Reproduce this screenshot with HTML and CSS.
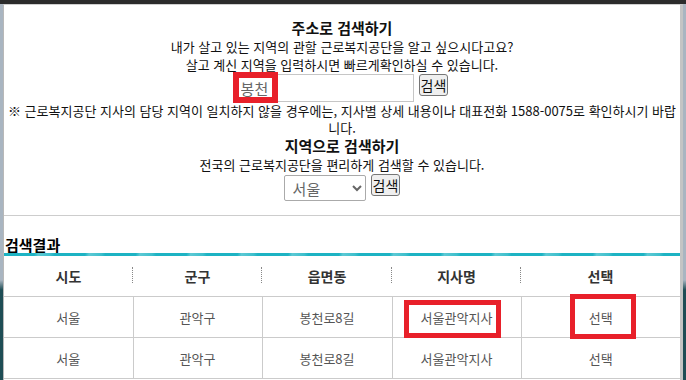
FILE: index.html
```html
<!DOCTYPE html>
<html lang="ko">
<head>
    <meta charset="UTF-8">
    <meta name="viewport" content="width=device-width, initial-scale=1.0">
    <title>근로복지공단 지사 찾기</title>
    <link rel="stylesheet" href="styles.css">
</head>
<body>
    <div class="top-bar"></div>

    <div class="modal">
        <div class="search-box">
            <h2>주소로 검색하기</h2>
            <p>내가 살고 있는 지역의 관할 근로복지공단을 알고 싶으시다고요?</p>
            <p>살고 계신 지역을 입력하시면 빠르게확인하실 수 있습니다.</p>
            <div class="form-row">
                <input type="text" id="address" value="봉천">
                <button>검색</button>
            </div>
            <p class="notice">※ 근로복지공단 지사의 담당 지역이 일치하지 않을 경우에는, 지사별 상세 내용이나 대표전화 1588-0075로 확인하시기 바랍니다.</p>

            <h2>지역으로 검색하기</h2>
            <p>전국의 근로복지공단을 편리하게 검색할 수 있습니다.</p>
            <div class="form-row">
                <select id="region">
                    <option>서울</option>
                    <option>부산</option>
                    <option>대구</option>
                    <option>인천</option>
                    <option>광주</option>
                </select>
                <button>검색</button>
            </div>
        </div>

        <div class="result">
            <h3>검색결과</h3>
            <div class="stripe"></div>
            <table>
                <colgroup>
                    <col style="width: 129px">
                    <col style="width: 129px">
                    <col style="width: 130px">
                    <col style="width: 129px">
                    <col>
                </colgroup>
                <thead>
                    <tr>
                        <th>시도</th>
                        <th>군구</th>
                        <th>읍면동</th>
                        <th>지사명</th>
                        <th>선택</th>
                    </tr>
                </thead>
                <tbody>
                    <tr>
                        <td>서울</td>
                        <td>관악구</td>
                        <td>봉천로8길</td>
                        <td>서울관악지사</td>
                        <td>선택</td>
                    </tr>
                    <tr>
                        <td>서울</td>
                        <td>관악구</td>
                        <td>봉천로8길</td>
                        <td>서울관악지사</td>
                        <td>선택</td>
                    </tr>
                </tbody>
            </table>
        </div>
    </div>

    <!-- red marks drawn over the screenshot -->
    <div class="mark mark-input"></div>
    <div class="mark mark-branch"></div>
    <div class="mark mark-select"></div>
</body>
</html>
```

FILE: styles.css
```css
body {
    margin: 0;
    height: 380px;
    overflow: hidden;
    font-family: "Noto Sans CJK KR", "Liberation Sans", sans-serif;
    background: linear-gradient(to bottom, #a9b5c1 0, #a9b5c1 280px, #1e4d55 290px, #1e4d55 100%);
    color: #222;
}
.top-bar {
    height: 4px;
    background-color: #2b2b2b;
}
.modal {
    margin-left: 3px;
    width: 680px;
    height: 376px;
    background-color: #fff;
    border-left: 1px solid #b8b8b8;
    border-top: 1px solid #cfcfcf;
    border-right: 3px solid #c4c4c4;
    box-sizing: border-box;
}
.search-box {
    text-align: center;
    padding: 13px 0 14px;
    border-bottom: 1px solid #cdcdcd;
}
.search-box h2 {
    margin: 0;
    font-size: 15px;
    line-height: 20px;
    font-weight: bold;
    color: #111;
}
.search-box p {
    margin: 0;
    font-size: 13px;
    line-height: 18px;
    color: #111;
}
.search-box .notice {
    line-height: 17px;
    padding: 0 3px;
}
.form-row {
    display: flex;
    justify-content: center;
    align-items: flex-start;
    gap: 5px;
}
.form-row input {
    width: 178px;
    height: 28px;
    box-sizing: border-box;
    border: 1px solid #c6c6c6;
    padding: 0 4px;
    font-family: inherit;
    font-size: 15px;
    color: #666;
}
.form-row select {
    width: 82px;
    height: 26px;
    margin-top: 1px;
    box-sizing: border-box;
    border: 1px solid #aaa;
    border-radius: 2px;
    background-color: #fff;
    padding: 0 4px;
    font-family: inherit;
    font-size: 15px;
    color: #666;
}
.form-row button {
    height: 22px;
    padding: 0 1px;
    font-family: inherit;
    font-size: 14px;
    line-height: 18px;
    color: #111;
    background-color: #efefef;
    border: 1px solid #767676;
    border-radius: 3px;
}
.result {
    padding-top: 20px;
}
.result h3 {
    margin: 0;
    padding-left: 1px;
    font-size: 15px;
    line-height: 17px;
    font-weight: bold;
    color: #000;
}
.stripe {
    height: 3px;
    background: repeating-linear-gradient(100deg, #1db3c3 0, #1db3c3 30px, #5cc9d4 34px, #3dbfcc 46px, #1db3c3 50px);
}
table {
    width: 100%;
    border-collapse: collapse;
    table-layout: fixed;
}
th {
    position: relative;
    height: 40px;
    padding: 0;
    font-size: 14px;
    font-weight: bold;
    color: #333;
    border-bottom: 1px solid #cbcbcb;
}
th::after {
    content: "";
    position: absolute;
    right: 0;
    top: 11px;
    height: 16px;
    border-right: 1px dotted #888;
}
th:last-child::after {
    display: none;
}
td {
    height: 40px;
    padding: 0;
    text-align: center;
    font-size: 13px;
    color: #555;
    border: 1px solid #cbcbcb;
    border-top: none;
}
td:first-child {
    border-left: none;
}
td:last-child {
    border-right: none;
}
.mark {
    position: absolute;
    border: 6px solid #e8202a;
    box-sizing: border-box;
}
.mark-input {
    left: 233px;
    top: 72px;
    width: 45px;
    height: 31px;
}
.mark-branch {
    left: 404px;
    top: 300px;
    width: 97px;
    height: 38px;
    border-width: 5px;
}
.mark-select {
    left: 570px;
    top: 294px;
    width: 66px;
    height: 45px;
    border-width: 5px;
}
```
